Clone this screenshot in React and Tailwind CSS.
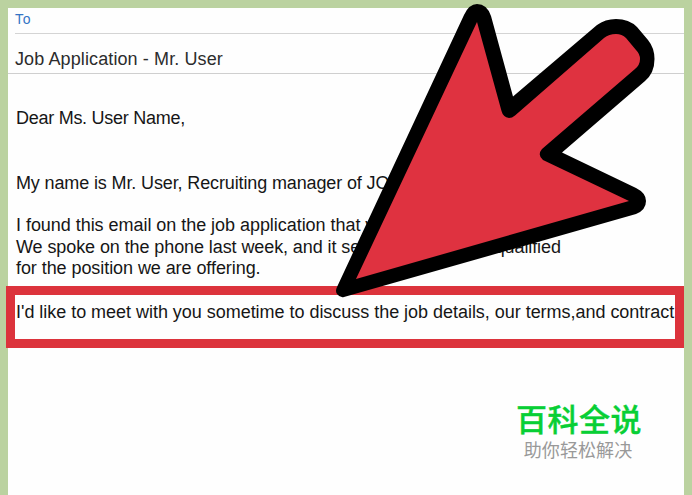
const bodyLines = [
  { text: 'Dear Ms. User Name,', className: 'mt-[34px] tracking-[-0.27px]' },
  { text: 'My name is Mr. User, Recruiting manager of JOB', className: 'mt-[43px] tracking-[-0.13px]' },
  { text: 'I found this email on the job application that you sent.', className: 'mt-[21px] tracking-[-0.04px]' },
  { text: 'We spoke on the phone last week, and it seems like you are qualified', className: 'tracking-[-0.09px]' },
  { text: 'for the position we are offering.', className: 'tracking-[-0.07px]' },
];

function Arrow() {
  return (
    <svg className="absolute left-0 top-0" width="692" height="320" viewBox="0 0 692 320">
      <path
        d="M464 15 Q469 4 477 4 Q487 4 491 16 L513 96.5 L597 25 Q605 19 616 19 Q629 19 637 27 L648 40 Q654.5 48 654.5 59 Q654.5 73 645 81 L562 152.5 L636 188 Q646 193 646 201 Q646 210 636 214 L344 297 Q340 298 337 294 Q335 291 337 287 Z"
        fill="#000"
      />
      <path
        d="M477 22 L501.500 111 Q503 117 509 118 Q512 118 515 115.500 L604 38 Q609 34 616 34 Q622 34 626 38 L636 50 Q640 54 640 59 Q640 65 635 69 L542 149 Q537 155 543 160 L629 201 L356 279 Z"
        fill="#df3240"
      />
    </svg>
  );
}

export default function App() {
  return (
    <div className="relative h-[495px] w-[692px] overflow-hidden bg-[#bbd2a0] px-2 pt-2 font-['Liberation_Sans',sans-serif]">
      <div className="flex h-[487px] flex-col bg-[#fefefe] text-[18px] leading-[21.6px] text-[#161616]">
        <div className="ml-[7px] h-[26px] border-b border-[#d4d4d4] text-[14px] leading-[23px] tracking-[0.7px] text-[#3474c4]">
          To
        </div>
        <div className="h-10 border-b border-[#cfcfcf] pl-[7px] pt-[15px] whitespace-nowrap tracking-[0.11px] text-[#2c2c2c]">
          Job Application - Mr. User
        </div>

        <div className="flex flex-col items-start pl-2 whitespace-nowrap">
          {bodyLines.map((line) => (
            <p key={line.text} className={line.className}>{line.text}</p>
          ))}
        </div>

        <div className="-ml-0.5 mt-1.5 h-[62px] w-[678px] shrink-0 border-9 border-[#dc333c] pl-px pt-[7px] whitespace-nowrap tracking-[-0.03px]">
          I'd like to meet with you sometime to discuss the job details, our terms,and contract
        </div>

        <div className="ml-[507px] mt-[52px] w-[128px] whitespace-nowrap text-center font-['Noto_Sans_CJK_SC',sans-serif]">
          <div className="text-[31px] font-medium leading-[36px] tracking-[0.5px] text-[#08cf35] [-webkit-text-stroke:0.4px_#08cf35]">百科全说</div>
          <div className="-ml-0.5 mt-0.5 text-[18px] leading-[22px] tracking-[0.1px] text-[#999]">助你轻松解决</div>
        </div>
      </div>
      <Arrow />
    </div>
  );
}
